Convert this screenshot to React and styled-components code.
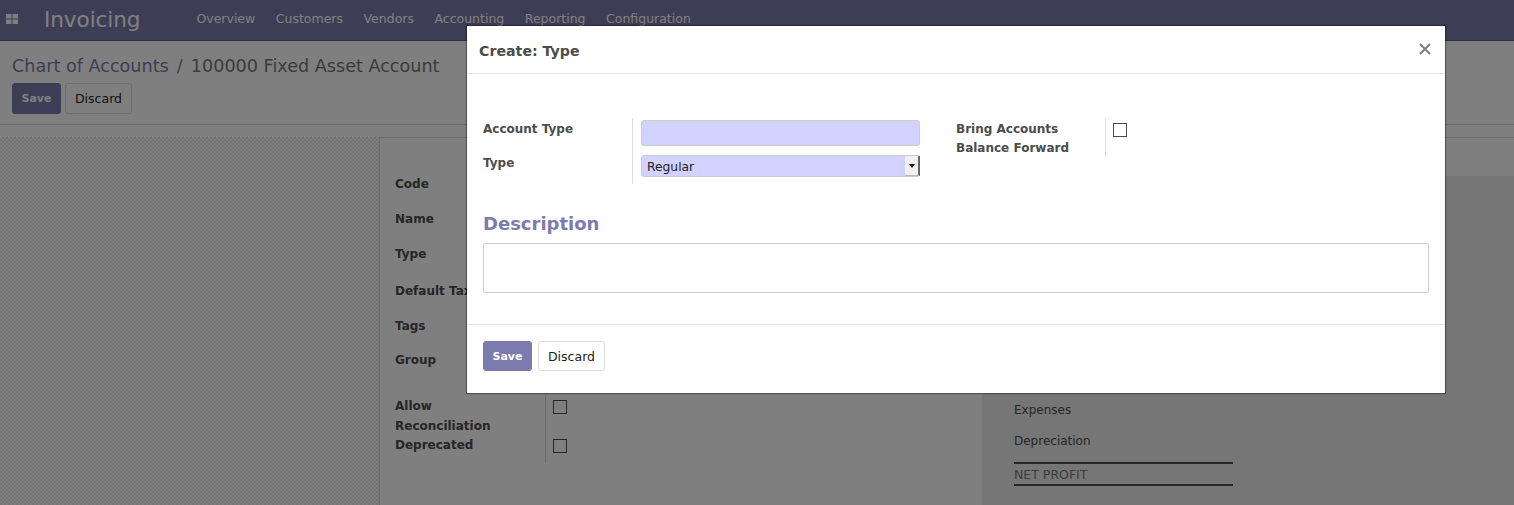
import React from 'react';
import styled, { createGlobalStyle } from 'styled-components';

const GlobalStyle = createGlobalStyle`
  html, body {
    margin: 0;
    height: 505px;
    overflow: hidden;
    background: #fff;
    font-family: "DejaVu Sans", "Liberation Sans", sans-serif;
    font-size: 12px;
    color: #4c4c4c;
  }
  * { box-sizing: border-box; }
`;

const Page = styled.div`
  position: relative;
  display: flex;
  flex-direction: column;
  height: 505px;
  overflow: hidden;
`;

const Navbar = styled.nav`
  display: flex;
  align-items: center;
  height: 41px;
  flex: none;
  background: #7c7bad;
  border-bottom: 1px solid #5f5e97;
  color: #fff;
`;

const AppsIcon = styled.svg`
  width: 12px;
  height: 10px;
  margin: 0 0 3px 6px;
  fill: #fff;
`;

const Brand = styled.div`
  margin: -2px 56px 0 26px;
  font-size: 21.6px;
  letter-spacing: -0.1px;
`;

const NavList = styled.div`
  display: flex;
  gap: 20.5px;
  margin-top: -3px;
`;

const NavItem = styled.span`
  font-size: 12.5px;
`;

const ControlPanel = styled.div`
  flex: none;
  height: 84px;
  padding: 14px 12px 0;
  background: #fff;
  border-bottom: 1px solid #d6d6d6;
`;

const Breadcrumb = styled.div`
  font-size: 17.6px;
  line-height: 22px;
  color: #777;
`;

const Crumb = styled.span`
  color: #7c7bad;
`;

const CrumbSlash = styled.span`
  margin: 0 2.5px;
  color: #7c7bad;
`;

const Buttons = styled.div`
  display: flex;
  gap: ${p => p.$gap || 4}px;
  margin-top: ${p => p.$top || 0}px;
`;

const Button = styled.button`
  height: 31px;
  padding: 0 ${p => (p.$primary ? 8.5 : 9)}px;
  font: ${p => (p.$primary ? 'bold 11px' : 'normal 12.5px')} "DejaVu Sans", sans-serif;
  color: ${p => (p.$primary ? '#fff' : '#222')};
  background: ${p => (p.$primary ? '#7c7bad' : '#fff')};
  border: 1px solid ${p => (p.$primary ? '#7c7bad' : '#ddd')};
  border-radius: 3px;
`;

const FooterButton = styled(Button)`
  height: 30px;
  padding-top: 1px;
`;

const TopBand = styled.div`
  flex: none;
  height: 12px;
  background: #fff;
`;

const Content = styled.div`
  display: flex;
  flex: 1;
  min-height: 0;
`;

const Gutter = styled.div`
  width: 379px;
  flex: none;
  background-color: #fff;
  background-image: repeating-conic-gradient(#e6e6e6 0 25%, #fff 0 50%);
  background-size: 4px 4px;
`;

const Sheet = styled.div`
  display: flex;
  flex: 1;
  background: #fff;
  border-top: 1px solid #d6d6d6;
  border-left: 1px solid #d6d6d6;
`;

const SheetForm = styled.div`
  width: 602px;
  flex: none;
  padding: 37px 0 0 15px;
`;

const SheetLabel = styled.div`
  height: ${p => p.$height || 35}px;
  font-size: 12px;
  font-weight: bold;
  line-height: ${p => p.$lineHeight || 18}px;
  color: #4c4c4c;
`;

const ChecksRow = styled.div`
  display: grid;
  grid-template-columns: 150px auto;
  width: 300px;
  margin-top: 8px;
`;

const ChecksLabels = styled.div`
  display: flex;
  flex-direction: column;
  padding-top: 1px;
`;

const ChecksValues = styled.div`
  display: flex;
  flex-direction: column;
  gap: 25px;
  height: 68px;
  padding: 5px 0 0 7px;
  border-left: 1px solid #d6d6d6;
`;

const Checkbox = styled.span`
  display: block;
  width: 14px;
  height: 14px;
  background: #fff;
  border: 1px solid #4c4c4c;
`;

const SidePanel = styled.div`
  flex: 1;
  margin-top: 38px;
  padding: 224px 0 0 32px;
  background: #ececec;
`;

const SideLine = styled.div`
  height: 31px;
  font-size: 12px;
  line-height: 20px;
  color: #4c4c4c;
`;

const Total = styled.div`
  width: 219px;
  height: 24px;
  border-top: 2px solid #4c4c4c;
  border-bottom: 2px solid #4c4c4c;
  font-size: 12.5px;
  line-height: 21px;
  color: #7a7a7a;
`;

const Backdrop = styled.div`
  position: absolute;
  inset: 0;
  background: rgba(0, 0, 0, 0.5);
`;

const Modal = styled.div`
  position: absolute;
  top: 26px;
  left: 467px;
  display: flex;
  flex-direction: column;
  width: 978px;
  height: 367px;
  background: #fff;
  box-shadow: 0 0 1px 1px rgba(0, 0, 0, 0.35);
`;

const ModalHeader = styled.header`
  display: flex;
  align-items: center;
  justify-content: space-between;
  flex: none;
  height: 48px;
  padding: 2px 13px 0 12px;
  border-bottom: 1px solid #e5e5e5;
`;

const ModalTitle = styled.h4`
  margin: 0;
  font-size: 14.2px;
  font-weight: bold;
  color: #4c4c4c;
`;

const CloseIcon = styled.svg`
  width: 14px;
  height: 14px;
  margin-top: -4px;
  stroke: #7f7f72;
  stroke-width: 2;
`;

const ModalBody = styled.div`
  flex: 1;
  padding: 44px 16px 0;
`;

const Columns = styled.div`
  display: flex;
  gap: 36px;
`;

const FieldGroup = styled.div`
  display: grid;
  grid-template-columns: 149px ${p => p.$valueWidth}px;
  align-self: flex-start;
`;

const FieldLabel = styled.label`
  font-size: 12px;
  font-weight: bold;
  line-height: 19px;
  height: ${p => p.$height}px;
  padding-top: ${p => p.$pad || 0}px;
  color: #4c4c4c;
`;

const FieldValue = styled.div`
  height: ${p => p.$height}px;
  padding: ${p => p.$pad || 0}px 0 0 ${p => p.$inset || 8}px;
  border-left: 1px solid #ddd;
`;

const TextInput = styled.input`
  display: block;
  width: 279px;
  height: 26px;
  background: #d2d2ff;
  border: 1px solid #ccc;
  border-radius: 3px;
`;

const SelectBox = styled.div`
  position: relative;
  width: 279px;
  height: 22px;
`;

const Select = styled.select`
  display: block;
  width: 100%;
  height: 100%;
  padding: 2px 0 0 5px;
  appearance: none;
  font: 12.3px "DejaVu Sans", sans-serif;
  color: #222;
  background: #d2d2ff;
  border: 1px solid #ccc;
  border-radius: 3px;
`;

const SelectArrow = styled.span`
  position: absolute;
  top: 1px;
  right: 0;
  display: flex;
  align-items: center;
  justify-content: center;
  width: 15px;
  height: 20px;
  background: #f0f0f0;
  border-right: 2px solid #666;
  border-bottom: 1px solid #bbb;
  &::after {
    content: '';
    border-top: 4px solid #111;
    border-left: 3px solid transparent;
    border-right: 3px solid transparent;
  }
`;

const Heading = styled.h2`
  margin: 28px 0 7px;
  font-size: 18px;
  line-height: 24px;
  font-weight: bold;
  color: #7c7bad;
`;

const TextArea = styled.textarea`
  display: block;
  width: 946px;
  height: 50px;
  background: #fff;
  border: 1px solid #ccc;
  border-radius: 3px;
  resize: none;
`;

const ModalFooter = styled.footer`
  flex: none;
  height: 69px;
  padding: 16px;
  border-top: 1px solid #e5e5e5;
`;

const App = () => (
  <Page>
    <GlobalStyle />
    <Navbar>
      <AppsIcon viewBox="0 0 12 10">
        <rect width="5.5" height="4.5" />
        <rect x="6.5" width="5.5" height="4.5" />
        <rect y="5.5" width="5.5" height="4.5" />
        <rect x="6.5" y="5.5" width="5.5" height="4.5" />
      </AppsIcon>
      <Brand>Invoicing</Brand>
      <NavList>
        <NavItem>Overview</NavItem>
        <NavItem>Customers</NavItem>
        <NavItem>Vendors</NavItem>
        <NavItem>Accounting</NavItem>
        <NavItem>Reporting</NavItem>
        <NavItem>Configuration</NavItem>
      </NavList>
    </Navbar>
    <ControlPanel>
      <Breadcrumb>
        <Crumb>Chart of Accounts</Crumb> <CrumbSlash>/</CrumbSlash> 100000 Fixed Asset Account
      </Breadcrumb>
      <Buttons $top={6}>
        <Button $primary>Save</Button>
        <Button>Discard</Button>
      </Buttons>
    </ControlPanel>
    <TopBand />
    <Content>
      <Gutter />
      <Sheet>
        <SheetForm>
          <SheetLabel>Code</SheetLabel>
          <SheetLabel>Name</SheetLabel>
          <SheetLabel $height={37}>Type</SheetLabel>
          <SheetLabel>Default Taxes</SheetLabel>
          <SheetLabel $height={34}>Tags</SheetLabel>
          <SheetLabel $height={36}>Group</SheetLabel>
          <ChecksRow>
            <ChecksLabels>
              <SheetLabel $height={40} $lineHeight={20}>
                Allow
                <br />
                Reconciliation
              </SheetLabel>
              <SheetLabel $height={18}>Deprecated</SheetLabel>
            </ChecksLabels>
            <ChecksValues>
              <Checkbox />
              <Checkbox />
            </ChecksValues>
          </ChecksRow>
        </SheetForm>
        <SidePanel>
          <SideLine>Expenses</SideLine>
          <SideLine>Depreciation</SideLine>
          <Total>NET PROFIT</Total>
        </SidePanel>
      </Sheet>
    </Content>
    <Backdrop />
    <Modal>
      <ModalHeader>
        <ModalTitle>Create: Type</ModalTitle>
        <CloseIcon viewBox="0 0 14 14">
          <path d="M2 2 L12 12 M12 2 L2 12" />
        </CloseIcon>
      </ModalHeader>
      <ModalBody>
        <Columns>
          <FieldGroup $valueWidth={288}>
            <FieldLabel $height={33} $pad={2}>Account Type</FieldLabel>
            <FieldValue $height={33} $pad={2}>
              <TextInput />
            </FieldValue>
            <FieldLabel $height={33} $pad={3}>Type</FieldLabel>
            <FieldValue $height={33} $pad={4}>
              <SelectBox>
                <Select defaultValue="regular">
                  <option value="regular">Regular</option>
                </Select>
                <SelectArrow />
              </SelectBox>
            </FieldValue>
          </FieldGroup>
          <FieldGroup $valueWidth={40}>
            <FieldLabel $height={39} $pad={2}>
              Bring Accounts
              <br />
              Balance Forward
            </FieldLabel>
            <FieldValue $height={39} $pad={5} $inset={7}>
              <Checkbox />
            </FieldValue>
          </FieldGroup>
        </Columns>
        <Heading>Description</Heading>
        <TextArea />
      </ModalBody>
      <ModalFooter>
        <Buttons $gap={6}>
          <FooterButton $primary>Save</FooterButton>
          <FooterButton>Discard</FooterButton>
        </Buttons>
      </ModalFooter>
    </Modal>
  </Page>
);

export default App;
